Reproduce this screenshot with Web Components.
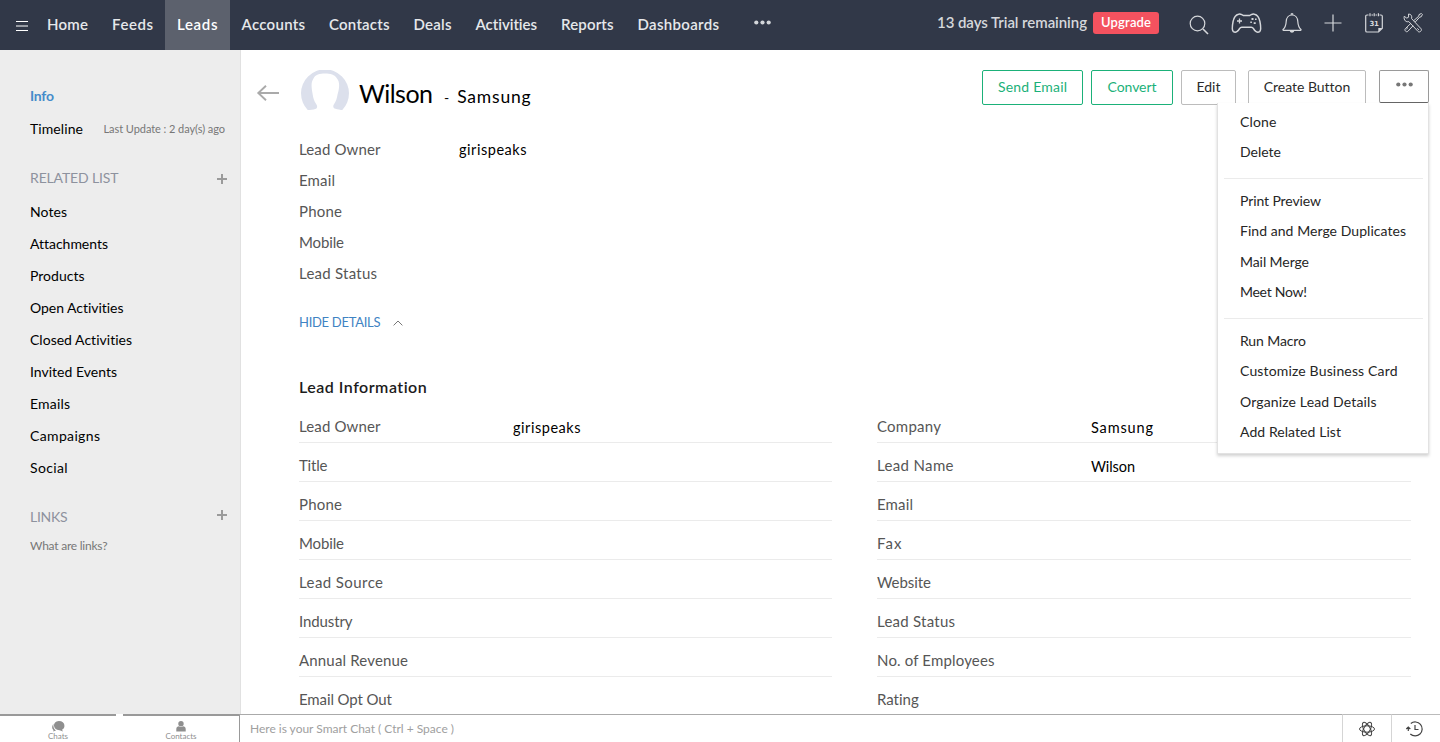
<!DOCTYPE html>
<html lang="en"><head><meta charset="utf-8"><title>Wilson - Leads</title>
<style>
html,body{margin:0;height:100%;overflow:hidden;background:#fff}
body{font-family:Lato,"Open Sans",sans-serif;font-size:15px;color:#000}
</style></head><body>
<crm-app></crm-app>
<script>
const define=(name,html,init)=>customElements.define(name,class extends HTMLElement{
  constructor(){super();this.attachShadow({mode:'open'});}
  connectedCallback(){
    if(this.ready)return;this.ready=true;
    this.shadowRoot.innerHTML=typeof html==='function'?html(this):html;
    if(init)init(this);
  }
});
const T=(text,w,extra='')=>`<text-run w="${w}" ${extra}>${text}</text-run>`;

/* A single line of text, tracked so that it fills the width given in "w". */
define('text-run','<style>:host{display:inline-block;white-space:nowrap;flex:none;padding-bottom:2px}</style><slot></slot>',el=>{
  const want=parseFloat(el.getAttribute('w'));
  const n=el.textContent.length;
  if(!want||n<2)return;
  const r=document.createRange();r.selectNodeContents(el);
  const d=(want-r.getBoundingClientRect().width)/(n-1);
  el.style.letterSpacing=d.toFixed(3)+'px';
  el.style.marginRight=(-d).toFixed(3)+'px';
});

const icons={
 menu:[12,10,'<path d="M0 .5h12M0 5h12M0 9.5h12" stroke-width="1"/>'],
 search:[20,20,'<circle cx="8.5" cy="8.5" r="7.3"/><path d="M14 14l5 5" stroke-width="1.6"/>'],
 pad:[31,21,'<path d="M7.6 1.2c2-.8 3 .7 4.6 1.2h6.6c1.600-.5 2.600-2 4.600-1.200 3.800.8 4.700 3.200 5.500 7.200.8 4 1.700 8.600-.3 10.200-2.300 1.700-4.800-.3-6.300-3.200-.5-.9-1.200-1.200-2-1.200h-9.600c-.8 0-1.500.3-2 1.200-1.500 2.900-4 4.900-6.300 3.200-2-1.600-1.100-6.200-.3-10.200.8-4 1.700-6.400 5.500-7.200z" stroke-width="1.500"/><path d="M8.500 5.500v5M6 8h5" stroke-width="1.300"/><path d="M20.500 5h2v2h-2zM24 5.500h1.600v1.600H24zM19.300 8.500h1.600v1.600h-1.600zM22.700 9.300h2v1.600h-2z" fill="currentColor" stroke="none"/>'],
 bell:[20,20,'<path d="M1 16.400c3-2.200 3-4.500 3.200-8C4.400 4.800 6.600 2 10 2s5.600 2.800 5.800 6.400c.2 3.500.2 5.800 3.200 8 .2.800-.3 1-1 1H2c-.7 0-1.200-.2-1-1zM9 1.500C9 .3 11 .3 11 1.500"/><path d="M7.800 18h4.400c-.3 2.200-4.100 2.200-4.400 0z" fill="currentColor" stroke="none"/>'],
 plus:[18,18,'<path d="M9 .5v17M.5 9h17" stroke-width="1.200"/>'],
 cal:[18,20,'<path d="M3.500 2H2C1.200 2 .7 2.500.7 3.300v14.400c0 .8.5 1.300 1.300 1.300h11.500l3.800-3.800V3.300c0-.8-.5-1.300-1.300-1.300h-1.500M6.500 2h1.500M10.500 2h1.500M5 .3v3M9.200 .3v3M13.400 .3v3"/><path d="M13.300 19v-4h4z" fill="currentColor" stroke="none"/>'],
 tools:[20,20,'<path d="M1.200 3.300l2.600 1.800 1.800-.9L5.500 1C8 1 9.300 3 8.600 5.600l9.500 10.200c1.200 1.700-1.400 4.200-3 2.700L5.800 8.600C3.200 9.500.5 7.300 1.200 3.300zM10.800 7.600l5-4.500.2-1.500 2.400-1.100 1 1-1.200 2.300-1.500.3-4.500 5M8 10.200l-5.700 5.500c-1.300 1.500 1 4.100 2.600 2.600l5.200-5.600M14.300 15.300l1.600 1.600M5 14.500l-1.700 1.700" stroke-width="1"/>'],
 dots:[17,5,'<g fill="currentColor" stroke="none"><circle cx="2.300" cy="2.500" r="2.100"/><circle cx="8.500" cy="2.500" r="2.100"/><circle cx="14.700" cy="2.500" r="2.100"/></g>'],
 add:[10,10,'<path d="M5 0v10M0 5h10" stroke-width="2"/>'],
 back:[22,16,'<path d="M1 8h21M9 .7L1.300 8 9 15.300" stroke-width="1.900"/>'],
 up:[10,6,'<path d="M.6 5.400L5 1l4.400 4.400" stroke-width="1"/>'],
 chats:[12,11,'<g fill="currentColor" stroke="none"><path d="M1.500 3C-.5 5 0 8 1.500 9l-.3 1.500L4 9.500C1.800 8.500 1 5 1.500 3z"/><path d="M6.800 0C14 0 13.500 8 10 8.700l1 1.800-3.300-1.300C.5 9.500 0 0 6.800 0z"/></g>'],
 person:[10,11,'<g fill="currentColor" stroke="none"><circle cx="5" cy="2.800" r="2.700"/><path d="M.3 10.600V8C.3 6 1.500 5.200 3 5.200c1 .9 3 .9 4 0 1.500 0 2.700.8 2.700 2.800v2.600z"/></g>'],
 atom:[16,16,'<g stroke-width="1"><ellipse cx="8" cy="8" rx="7.500" ry="3.200"/><ellipse cx="8" cy="8" rx="7.500" ry="3.200" transform="rotate(60 8 8)"/><ellipse cx="8" cy="8" rx="7.500" ry="3.200" transform="rotate(120 8 8)"/></g>'],
 history:[17,16,'<path d="M4.800 2.500A7 7 0 1 1 4.300 13M2.300 10V6.500M.3 8l2-2 2 2M9 4v4.500h3.500"/>']
};
define('crm-icon',el=>{
  const [w,h,p]=icons[el.getAttribute('name')];
  return `<style>:host{display:inline-flex;flex:none}svg{display:block;overflow:visible}</style>
  <svg width="${w}" height="${h}" viewBox="0 0 ${w} ${h}" fill="none" stroke="currentColor" stroke-width="1.2">${p}</svg>`;
});

define('top-nav',`<style>
:host{display:flex;height:50px;background:#313848;color:#e6e8eb;font-weight:600;box-sizing:border-box}
.menu{display:flex;align-items:center;padding:1px 0 0 16px;width:19px;color:#fff}
.tab{display:flex;align-items:center;padding:0 12px 1px;height:49px}
.on{background:#5c616d;color:#fff}
.dots{padding:0 0 5px 22.500px;display:flex;align-items:center;color:#d3d6da}
.right{margin-left:auto;display:flex;align-items:center;height:46px;color:#d5d7db}
.trial{padding-bottom:1px}
.up{display:flex;justify-content:center;align-items:center;background:#f4525f;color:#fff;border-radius:3px;height:22px;width:66px;margin:0 30px 0 6px;font-size:13px}
.cal{display:grid}.cal>*{grid-area:1/1}.cal span{font:700 7px/20px "DejaVu Sans",sans-serif;text-align:center;padding-top:1px;letter-spacing:-.3px}
</style>
<div class="menu"><crm-icon name="menu"></crm-icon></div>
${[['Home',41],['Feeds',41],['Leads',40.500,1],['Accounts',63.500],['Contacts',60.500],['Deals',38],['Activities',62],['Reports',52.500],['Dashboards',81.500]].map(([t,w,on])=>`<div class="tab ${on?'on':''}">${T(t,w)}</div>`).join('')}
<div class="dots"><crm-icon name="dots"></crm-icon></div>
<div class="right"><div class="trial">${T('13 days Trial remaining',150)}</div><div class="up">${T('Upgrade',50)}</div>
<crm-icon name="search" style="margin:4px 22px 0 0"></crm-icon><crm-icon name="pad" style="margin-right:20px"></crm-icon><crm-icon name="bell" style="margin-right:22px"></crm-icon><crm-icon name="plus" style="margin-right:23px"></crm-icon>
<div class="cal" style="margin-right:20px"><crm-icon name="cal"></crm-icon><span>31</span></div><crm-icon name="tools" style="margin-right:17px"></crm-icon></div>`);

define('side-bar',`<style>
:host{display:block;width:240px;background:#ededed;border-right:1px solid #e1e1e1;padding-top:30px;box-sizing:content-box;font-size:14px}
.r{display:flex;align-items:center;height:32px;padding-left:30px}
.r33{height:33px}
.info{color:#458bca;font-weight:700}
.upd{margin-left:20.500px;color:#777;font-size:11px}
.h{justify-content:space-between;padding-right:13px;color:#8d929e}
.h crm-icon{color:#9b9b9b}
</style>
<div class="r r33 info">${T('Info',24)}</div>
<div class="r r33">${T('Timeline',53)}<span class="upd">${T('Last Update : 2 day(s) ago',121.500)}</span></div>
<div class="r r33 h" style="margin-top:16px">${T('RELATED LIST',88.500)}<crm-icon name="add"></crm-icon></div>
<div style="height:1px"></div>
${[['Notes',37],['Attachments',77.500],['Products',54.500],['Open Activities',94],['Closed Activities',102.500],['Invited Events',87],['Emails',40],['Campaigns',70],['Social',37.500]].map(a=>`<div class="r">${T(...a)}</div>`).join('')}
<div class="r h" style="margin-top:17px">${T('LINKS',37.500)}<crm-icon name="add" style="margin-bottom:4px"></crm-icon></div>
<div class="r" style="height:26px;font-size:12px;color:#777">${T('What are links?',77.500)}</div>`);

define('crm-button',el=>`<style>
:host{display:flex;align-items:center;justify-content:center;box-sizing:border-box;height:35px;border:1px solid #bcbcbc;border-radius:2px;font-size:14px;color:#2b2b2b;background:#fff}
:host([primary]){border-color:#1bb179;color:#1bb179}
:host([more]){height:33px;border-color:#9a9a9a #9a9a9a #666;color:#777;padding-bottom:4px}
</style><slot></slot>`);

define('record-header',`<style>
:host{display:flex;height:58px;padding:20px 11px 0 16px;align-items:flex-start}
.back{padding-top:15px;color:#aaa;width:44px}
.av{width:48px;height:40px;display:block;margin-right:10px;flex:none}
.name{display:flex;align-items:baseline;height:46px;line-height:46px;font-size:25px;font-weight:400}
.name .s{font-size:17.500px}
.b{margin-left:auto;display:flex}
</style>
<div class="back"><crm-icon name="back"></crm-icon></div>
<svg class="av" viewBox="0 0 48 40"><path d="M7 40.300A24 24 0 1 1 41 40.300C38 39.400 35 39 33 38.200c-1-1.500-1-2.500 0-4 2-2.700 3-6 3.600-10C38.500 18 39 12 36 8.500 34 4.500 29 3.500 24 3.500S14 4.500 12.500 8.500C9.500 13 10.700 18 11.600 24c.6 4 1.600 7.400 3.400 9.700 1.200 1.500 1.500 3 .7 4.500C14 39.600 10 39.600 7 40.300z" fill="#dce0ec"/></svg>
<div class="name">${T('Wilson',74)}<span style="font-size:14px;margin:0 8px 0 11px">${T('-',4)}</span><span class="s">${T('Samsung',73.500)}</span></div>
<div class="b">
<crm-button primary style="width:101px;margin-right:8px">${T('Send Email',69)}</crm-button>
<crm-button primary style="width:82px;margin-right:8px">${T('Convert',49)}</crm-button>
<crm-button style="width:55px;margin-right:12px">${T('Edit',24)}</crm-button>
<crm-button style="width:118px;margin-right:13px">${T('Create Button',86)}</crm-button>
<crm-button more style="width:50px"><crm-icon name="dots"></crm-icon></crm-button></div>`);

define('action-menu',`<style>
:host{position:absolute;left:1217px;top:103px;width:212px;height:351px;box-sizing:border-box;background:#fff;border:1px solid #e2e2e2;border-top:0;box-shadow:0 2px 3px rgba(0,0,0,.18);padding-top:4px;font-size:14px;color:#262626}
.i{height:30.500px;display:flex;align-items:center;padding-left:22px}
hr{border:0;height:1px;background:#ebebeb;margin:10px 5px 7px 6px}
</style>${[['Clone',36.500],['Delete',41],0,['Print Preview',81],['Find and Merge Duplicates',166],['Mail Merge',69],['Meet Now!',67],0,['Run Macro',66],['Customize Business Card',157.500],['Organize Lead Details',136.500],['Add Related List',101]].map(a=>a?`<div class="i">${T(...a)}</div>`:'<hr>').join('')}`);

define('field-row',el=>{
 const a=n=>el.getAttribute(n);
 return `<style>
:host{display:flex;align-items:center;height:31px;color:#565656}
:host([lined]){height:38px;border-bottom:1px solid #ebebeb;box-sizing:content-box}
:host([lined]) .l{padding-top:8px}
:host([lined]) .v{padding-top:10px}
.l{width:${a('lw')||160}px}.v{padding-top:2px;font-size:14.500px;color:#000}
</style><div class="l">${T(a('label'),a('w'))}</div>${a('value')?`<div class="v">${T(a('value'),a('vw'))}</div>`:''}`;
});
const F=([l,w,v,vw],lined)=>`<field-row label="${l}" w="${w}" ${v?`value="${v}" vw="${vw}"`:''} ${lined?'lined lw="214"':''}></field-row>`;

define('record-page',`<style>
:host{display:block;flex:1;min-width:0}
.sum{padding:6px 0 0 58px}
.hide{display:flex;align-items:center;height:24px;margin:22px 0 0 58px;font-size:13px;color:#3f83c3}
.hide crm-icon{margin-left:12px;color:#777}
h2{margin:41px 0 0 58px;font-size:16px;line-height:22px;height:28px;font-weight:600;color:#1c1c1c}
.g{display:grid;grid-template-columns:533px 534px;column-gap:45px;padding-left:58px}
</style><record-header></record-header>
<div class="sum">${[['Lead Owner',81.500,'girispeaks',67.500],['Email',36],['Phone',43],['Mobile',45],['Lead Status',78]].map(x=>F(x)).join('')}</div>
<div class="hide">${T('HIDE DETAILS',81.500)}<crm-icon name="up"></crm-icon></div>
<h2>${T('Lead Information',128)}</h2>
<div class="g"><div>${[['Lead Owner',81.500,'girispeaks',67.500],['Title',28.500],['Phone',43],['Mobile',45],['Lead Source',84],['Industry',53.500],['Annual Revenue',109],['Email Opt Out',93]].map(x=>F(x,1)).join('')}</div>
<div>${[['Company',64,'Samsung',62],['Lead Name',76.500,'Wilson',44],['Email',36],['Fax',24.500],['Website',54],['Lead Status',78],['No. of Employees',117.500],['Rating',42]].map(x=>F(x,1)).join('')}</div></div>`);

define('chat-bar',`<style>
:host{display:flex;height:28px;background:#fff;color:#999}
.t{box-sizing:border-box;border-top:2px solid #999;height:28px;display:flex;flex-direction:column;align-items:center;font-size:8px;line-height:9px;padding-top:5px;color:#8f8f8f}
.c{flex:1;box-sizing:border-box;border-top:1px solid #aaa;border-left:1px solid #999;display:flex;align-items:center;padding:1px 0 0 10px;font-size:12px;color:#a0a0a0}
.q{box-sizing:border-box;width:49px;border-top:1px solid #bbb;border-left:1px solid #d5d5d5;display:flex;align-items:center;justify-content:center;color:#444}
</style>
<div class="t" style="width:116px">
<crm-icon name="chats"></crm-icon>${T('Chats',20)}</div>
<div class="t" style="width:116px;margin-left:7px"><crm-icon name="person"></crm-icon>${T('Contacts',31)}</div>
<div class="c">${T('Here is your Smart Chat ( Ctrl + Space )',204)}</div>
<div class="q"><crm-icon name="atom"></crm-icon></div><div class="q"><crm-icon name="history" style="margin-right:3px"></crm-icon></div>`);

define('crm-app',`<style>
:host{display:grid;grid-template-rows:50px 664px 28px;width:1440px;height:742px;position:relative;overflow:hidden;background:#fff}
.body{display:flex;overflow:hidden}
</style><top-nav></top-nav><div class="body"><side-bar></side-bar><record-page></record-page></div><chat-bar></chat-bar><action-menu></action-menu>`);
</script></body></html>
